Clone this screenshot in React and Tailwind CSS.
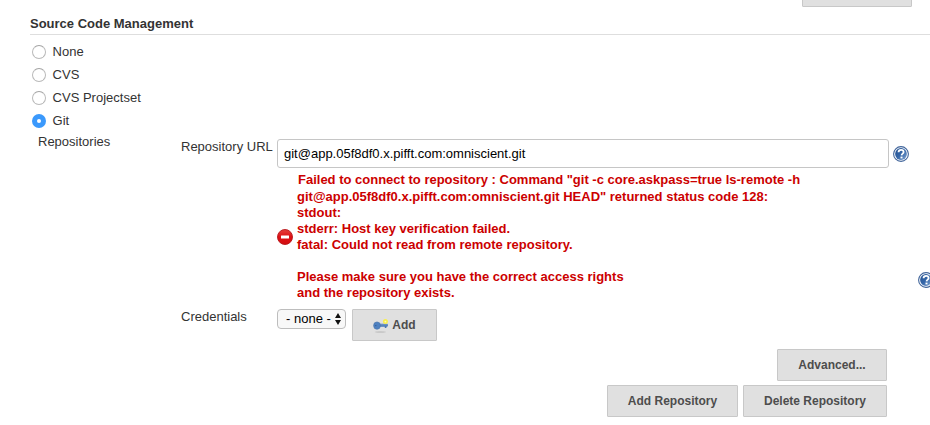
import React from "react";

const SCM_OPTIONS = ["None", "CVS", "CVS Projectset", "Git"];

function Radio({ label, checked }) {
  return (
    <label className="flex h-[23px] items-center">
      {checked ? (
        <span className="mt-px flex size-[14px] items-center justify-center rounded-full bg-[#3b99fc]">
          <span className="size-[4px] rounded-full bg-white" />
        </span>
      ) : (
        <span className="mt-px size-[14px] rounded-full border border-[#b9b9b9] border-t-[#a4a4a4] bg-white" />
      )}
      <span className="ml-[6.6px]">{label}</span>
    </label>
  );
}

function HelpIcon() {
  return (
    <svg className="block size-4 shrink-0" viewBox="0 0 16 16">
      <defs>
        <linearGradient id="help" x1="0" y1="0" x2="1" y2="1">
          <stop offset="0" stopColor="#24508f" />
          <stop offset="0.5" stopColor="#3566a8" />
          <stop offset="1" stopColor="#83a6d3" />
        </linearGradient>
      </defs>
      <circle cx="8" cy="8" r="7.4" fill="#fff" stroke="#41659b" strokeWidth="1.1" />
      <circle cx="8" cy="8" r="5.9" fill="url(#help)" />
      <path d="M5.5 6.2C5.6 4.5 6.7 3.8 8.1 3.8s2.5.8 2.5 2.2c0 1.6-1.9 1.7-2.1 3.4" fill="none" stroke="#fff" strokeWidth="1.8" />
      <rect x="7.5" y="10.6" width="2" height="1.8" fill="#fff" />
    </svg>
  );
}

function ErrorIcon() {
  return (
    <svg className="block size-4 shrink-0" viewBox="0 0 16 16">
      <defs>
        <linearGradient id="err" x1="0" y1="0" x2="0" y2="1">
          <stop offset="0" stopColor="#e4403c" />
          <stop offset="0.5" stopColor="#dd1014" />
          <stop offset="1" stopColor="#d30d10" />
        </linearGradient>
      </defs>
      <circle cx="8" cy="8" r="7.5" fill="url(#err)" stroke="#b8151a" strokeWidth="0.9" />
      <rect x="4" y="6.4" width="8" height="3.1" rx="0.3" fill="#fff" />
    </svg>
  );
}

function KeyIcon() {
  return (
    <svg className="block size-4 shrink-0" viewBox="0 0 16 16">
      <ellipse cx="7.4" cy="15" rx="5.6" ry="0.7" fill="#b5b5b5" opacity="0.7" />
      <path d="M6 6.8h8.4l.6 1.4-.7 1.5h-.9v1.2h-1.6V9.8H6z" fill="#4a78b4" />
      <path d="M6.5 7.8h7.8" stroke="#7c9fcc" strokeWidth="0.9" />
      <ellipse cx="4" cy="8.6" rx="3.4" ry="3.7" fill="#4f81c0" stroke="#4673ab" strokeWidth="0.6" />
      <circle cx="2.8" cy="8.6" r="0.7" fill="#33598c" />
      <circle cx="12.4" cy="4.6" r="2.5" fill="#f8ee4e" />
      <circle cx="12.4" cy="4.6" r="0.9" fill="#fffcb4" />
    </svg>
  );
}

function Button({ className, children }) {
  return (
    <button
      className={`flex h-8 items-center justify-center rounded-[1px] border border-[#c8c8c8] bg-[#e0e0e0] text-[12px] font-bold text-[#4d4d4d] ${className}`}
    >
      {children}
    </button>
  );
}

export default function App() {
  return (
    <div className="h-[425px] w-[930px] overflow-hidden bg-white font-['Liberation_Sans',Arial,sans-serif] text-[13px] leading-4 text-[#333]">
      <div className="flex h-[7px] items-end justify-end pr-[18px]">
        <Button className="w-[110px] shrink-0" />
      </div>

      <h2 className="ml-[30px] flex h-7 items-center border-b border-[#dedede] pt-[6px] font-bold">
        Source Code Management
      </h2>

      <div className="ml-8 pt-[5px]">
        {SCM_OPTIONS.map((name) => (
          <Radio key={name} label={name} checked={name === "Git"} />
        ))}
      </div>

      <div className="flex h-[217px] pl-[38px]">
        <div className="w-[143px] shrink-0 pt-[2px]">Repositories</div>

        <div className="w-[708px] shrink-0 pt-[7px]">
          <div className="flex">
            <div className="w-24 shrink-0">Repository URL</div>
            <div className="flex h-[29px] w-[612px] items-center rounded-[3px] border border-[#c6c6c6] px-[6px] text-black">
              git@app.05f8df0.x.pifft.com:omniscient.git
            </div>
          </div>

          <div className="ml-24 mt-1 flex h-[129px] items-center font-bold text-[#cc0000]">
            <ErrorIcon />
            <div className="ml-1 whitespace-pre">
              <div className="mb-px pl-px">Failed to connect to repository : Command "git -c core.askpass=true ls-remote -h</div>
              <div>git@app.05f8df0.x.pifft.com:omniscient.git HEAD" returned status code 128:</div>
              <div>stdout:</div>
              <div>stderr: Host key verification failed.</div>
              <div>fatal: Could not read from remote repository.</div>
              <div className="h-4" />
              <div>Please make sure you have the correct access rights</div>
              <div>and the repository exists.</div>
            </div>
          </div>

          <div className="mt-2 flex items-start">
            <div className="w-24 shrink-0">Credentials</div>
            <div className="flex h-5 w-[69px] items-center justify-between rounded-[4px] border border-[#bdbdbd] bg-[#f8f8f8] pl-2 pr-[4px] text-black">
              <span>- none -</span>
              <svg className="h-3 w-[6px]" viewBox="0 0 6 12">
                <path d="M0 5 3 0l3 5zM0 7h6l-3 5z" fill="#111" />
              </svg>
            </div>
            <Button className="ml-[6px] w-[85px] gap-[3px]">
              <KeyIcon />
              <span>Add</span>
            </Button>
          </div>
        </div>

        <div className="shrink-0 pl-1 pt-[14px]">
          <HelpIcon />
          <div className="ml-[25px] mt-[110px]">
            <HelpIcon />
          </div>
        </div>
      </div>

      <div className="flex w-[887px] flex-col items-end gap-1">
        <Button className="w-[110px]">Advanced...</Button>
        <div className="flex gap-[5px]">
          <Button className="w-[131px]">Add Repository</Button>
          <Button className="w-36">Delete Repository</Button>
        </div>
      </div>
    </div>
  );
}
